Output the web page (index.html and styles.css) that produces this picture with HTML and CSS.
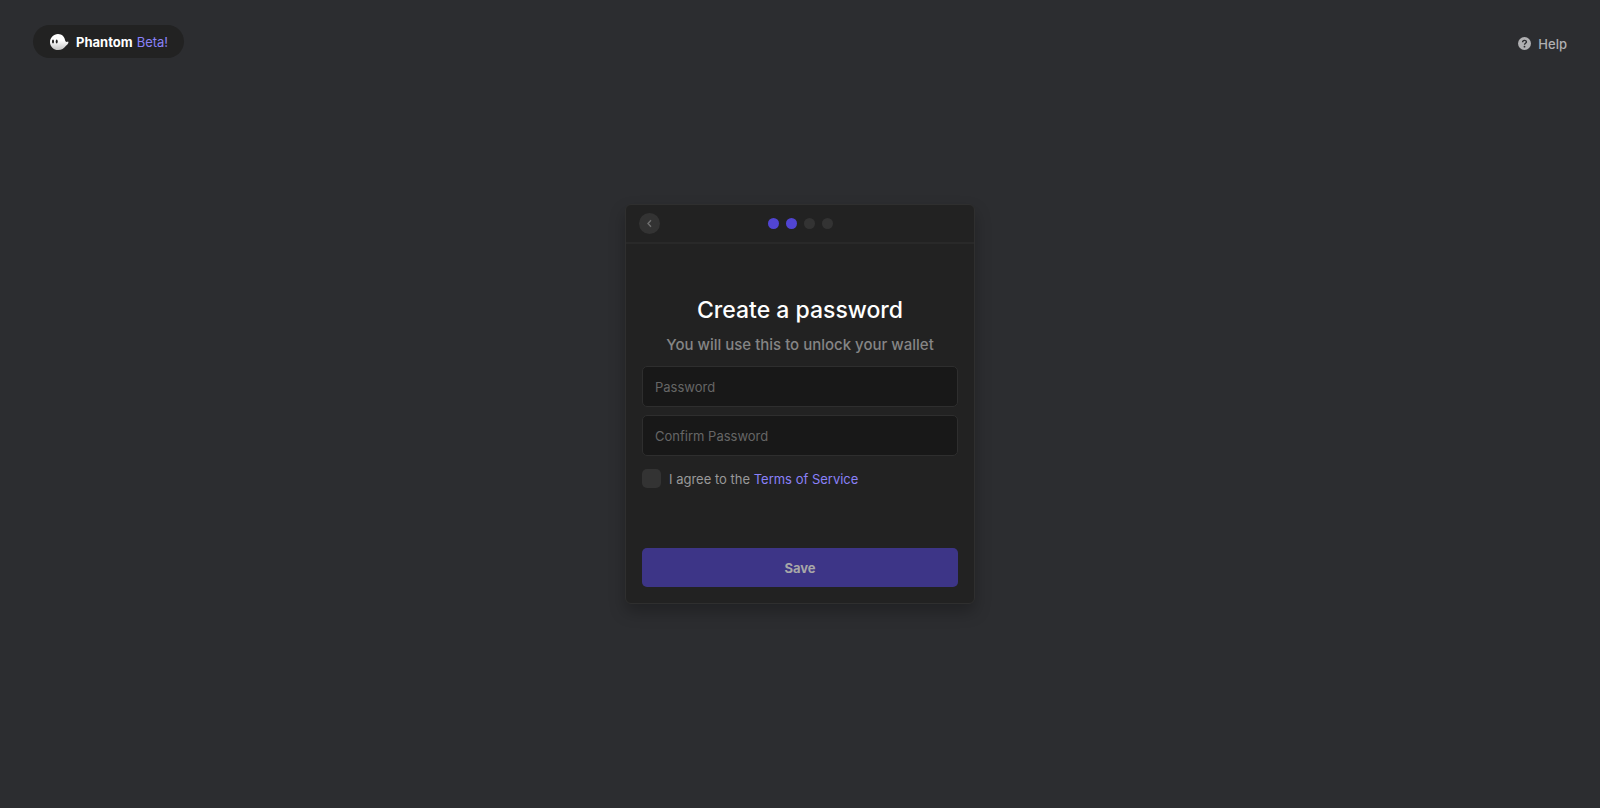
FILE: index.html
```html
<!DOCTYPE html>
<html lang="en">
<head>
    <meta charset="utf-8">
    <title>Phantom Wallet</title>
    <link rel="stylesheet" href="styles.css">
</head>
<body>
    <header class="top-bar">
        <div class="brand">
            <svg class="brand-logo" width="20" height="18" viewBox="0 0 20 18" aria-hidden="true">
                <defs>
                    <linearGradient id="ghost" x1="0" y1="0" x2="0" y2="1">
                        <stop offset="0.4" stop-color="#fff"/>
                        <stop offset="1" stop-color="#c4c4c4"/>
                    </linearGradient>
                </defs>
                <path fill="url(#ghost)" d="M9 1C13 1 15.500 3.800 16 7C16.300 9 17.800 9.200 19 8.600C20 9 19.300 11.200 17 12.700C15 15.500 12.500 17 9.200 17C4.500 17 1 13.500 1 9.200S4.500 1 9 1Z"/>
                <ellipse cx="4" cy="8.500" rx="1" ry="2.100" fill="#222"/>
                <ellipse cx="7.700" cy="8.500" rx="1" ry="2.100" fill="#222"/>
            </svg>
            <span class="brand-name">Phantom</span>
            <span class="brand-tag">Beta!</span>
        </div>
        <a class="help" href="#">
            <svg width="13" height="13" viewBox="0 0 13 13" aria-hidden="true">
                <circle cx="6.500" cy="6.500" r="6.500" fill="#b0b0b2"/>
                <path d="M4.600 5.200C4.600 2.700 8.500 2.800 8.400 5C8.300 6.300 6.500 6.300 6.500 7.800" fill="none" stroke="#2c2d30" stroke-width="1.400"/>
                <circle cx="6.500" cy="9.700" r="0.900" fill="#2c2d30"/>
            </svg>
            Help
        </a>
    </header>

    <main class="card">
        <div class="card-header">
            <button class="back" type="button" aria-label="Back">
                <svg width="7" height="9" viewBox="0 0 7 9" aria-hidden="true">
                    <path d="M5 1.200L2 4.500L5 7.800" fill="none" stroke="#707070" stroke-width="1.400"/>
                </svg>
            </button>
            <div class="steps">
                <span class="dot active"></span>
                <span class="dot active"></span>
                <span class="dot"></span>
                <span class="dot"></span>
            </div>
        </div>

        <form class="card-body">
            <h1>Create a password</h1>
            <p class="subtitle">You will use this to unlock your wallet</p>
            <input class="field" type="password" placeholder="Password" aria-label="Password">
            <input class="field" type="password" placeholder="Confirm Password" aria-label="Confirm Password">
            <div class="terms">
                <input type="checkbox" id="agree">
                <label for="agree">I agree to the <a href="#">Terms of Service</a></label>
            </div>
            <button class="save" type="submit" disabled>Save</button>
        </form>
    </main>
</body>
</html>
```

FILE: styles.css
```css
* {
    box-sizing: border-box;
}

body {
    margin: 0;
    min-height: 100vh;
    display: grid;
    grid-template-rows: 1fr auto 1fr;
    justify-items: center;
    background-color: #2c2d30;
    color: #999;
    font-family: Inter, Roboto, sans-serif;
    font-size: 13px;
}

button, input {
    font-family: inherit;
    font-size: 13px;
}

a {
    color: #8a81f8;
    text-decoration: none;
}

.top-bar {
    width: 100%;
    padding: 25px 33px;
    display: flex;
    justify-content: space-between;
    align-items: flex-start;
}

.brand {
    display: flex;
    align-items: center;
    height: 33px;
    padding: 0 16px;
    border-radius: 17px;
    background-color: #222;
}

.brand-name {
    margin: 0 4px 0 7px;
    color: #fff;
    font-weight: 700;
}

.brand-tag {
    color: #8a81f8;
    font-weight: 400;
}

.help {
    display: flex;
    align-items: center;
    gap: 7px;
    height: 37px;
    color: #b0b0b2;
    font-weight: 500;
}

.card {
    display: flex;
    flex-direction: column;
    width: 350px;
    max-width: 100%;
    min-height: 400px;
    background-color: #222;
    border: 1px solid #2f2f2f;
    border-radius: 6px;
    box-shadow: 0 8px 16px rgba(0, 0, 0, 0.25);
}

.card-header {
    display: grid;
    grid-template-columns: 1fr auto 1fr;
    align-items: center;
    height: 39px;
    padding: 0 13px;
    border-bottom: 2px solid #292929;
}

.back {
    display: flex;
    align-items: center;
    justify-content: center;
    width: 21px;
    height: 21px;
    padding: 0;
    border: none;
    border-radius: 50%;
    background-color: #333;
}

.steps {
    display: flex;
    gap: 7px;
}

.dot {
    width: 11px;
    height: 11px;
    border-radius: 50%;
    background-color: #333;
}

.dot.active {
    background-color: #5145d2;
}

.card-body {
    flex: 1;
    display: flex;
    flex-direction: column;
    padding: 50px 16px 16px;
}

h1 {
    margin: 0 0 8px;
    color: #fff;
    font-size: 23px;
    line-height: 32px;
    font-weight: 500;
    text-align: center;
}

.subtitle {
    margin: 0 0 10px;
    color: #858585;
    font-size: 15px;
    line-height: 22px;
    font-weight: 500;
    text-align: center;
}

.field {
    width: 100%;
    height: 41px;
    margin-bottom: 8px;
    padding: 0 12px;
    border: 1px solid #2e2e2e;
    border-radius: 5px;
    background-color: #181818;
    color: #fff;
}

.field::placeholder {
    color: #666;
}

.terms {
    display: flex;
    align-items: center;
    gap: 8px;
    margin-top: 5px;
}

.terms input {
    appearance: none;
    width: 19px;
    height: 19px;
    margin: 0;
    border-radius: 5px;
    background-color: #333;
}

.terms input:checked {
    background-color: #5145d2;
}

.save {
    height: 39px;
    margin-top: auto;
    border: none;
    border-radius: 5px;
    background-color: #3d3587;
    color: #a7a7a7;
    font-weight: 700;
}
```
